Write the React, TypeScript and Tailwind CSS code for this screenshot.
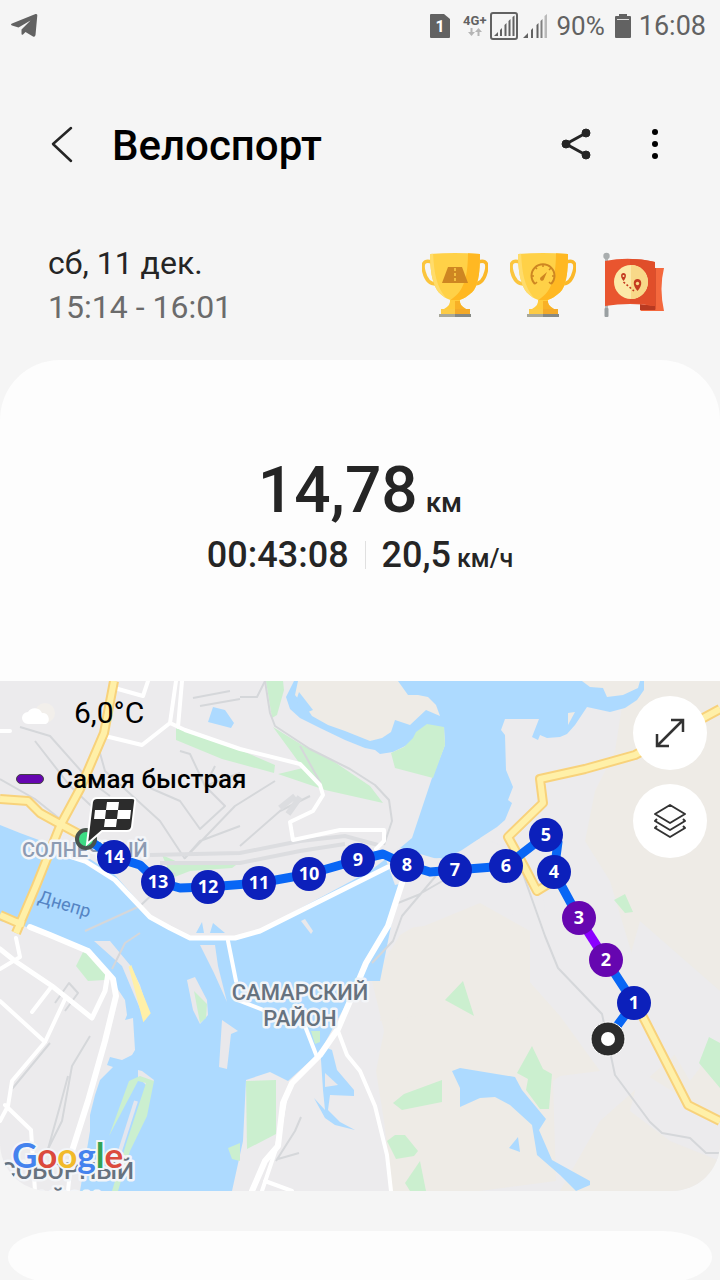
import React from 'react';

type Marker = { n: number; x: number; y: number; fast?: boolean };

// Kilometre marks along the route
const MARKERS: Marker[] = [
    { n: 14, x: 114, y: 176 },
    { n: 13, x: 158, y: 201 },
    { n: 12, x: 208, y: 206 },
    { n: 11, x: 259, y: 202 },
    { n: 10, x: 309, y: 193 },
    { n: 9, x: 358, y: 179 },
    { n: 8, x: 407, y: 184 },
    { n: 7, x: 455, y: 189 },
    { n: 6, x: 506, y: 185 },
    { n: 5, x: 546, y: 154 },
    { n: 4, x: 554, y: 191 },
    { n: 3, x: 579, y: 237, fast: true },
    { n: 2, x: 606, y: 279, fast: true },
    { n: 1, x: 634, y: 322 },
];

function StatusBar() {
    return (
        <div className="flex h-[52px] items-center justify-between pl-2.5 pr-3.5 text-[#626262]">
            <svg className="h-7 w-7" viewBox="0 0 28 28" fill="currentColor">
                <path d="M25.500 2 Q27.500 1.500 27.300 3.500 L25.500 23 Q25 25.500 23 24.500 L15.500 20 L13 22.500 Q11.500 23.500 11.500 21.500 V17.500 L20.500 8.500 L8.500 15.500 L2 13.500 Q0 12.500 2 11.500 Z" />
            </svg>
            <div className="flex items-center leading-8">
                <svg className="mr-3 h-6 w-[21px]" viewBox="0 0 21 24">
                    <path d="M1 0 H14 L20 5 V23 Q20 24 19 24 H1 Q0 24 0 23 V1 Q0 0 1 0 Z" fill="#626262" />
                    <text x="10" y="18" textAnchor="middle" fontSize="16" fontWeight="700" fill="#fff">1</text>
                </svg>
                <div className="mr-1 flex flex-col items-center">
                    <span className="text-[13px] font-bold leading-3">4G+</span>
                    <svg className="h-2.5 w-3.5" viewBox="0 0 14 10" fill="#b5b5b5">
                        <path d="M2.500 1 H4.500 V5 H7 L3.500 9 L0 5 H2.500 Z M9.500 9 H11.500 V5 H14 L10.500 1 L7 5 H9.500 Z" />
                    </svg>
                </div>
                <svg className="mr-1 h-7 w-7" viewBox="0 0 28 28" fill="currentColor">
                    <rect x="1" y="1" width="26" height="26" rx="2" fill="none" stroke="currentColor" strokeWidth="2" />
                    <path d="M4 24 L8 20 V24 Z M10 18 L12 16 V24 H10 Z M14.500 13 L16.500 11 V24 H14.500 Z M18.500 9 L20.500 7 V24 H18.500 Z M22.500 5 L24.500 3.500 V24 H22.500 Z" />
                </svg>
                <svg className="mr-2 h-[26px] w-[26px]" viewBox="0 0 26 26" fill="currentColor">
                    <path d="M1 25 L6 20 V25 Z M9 17 L11 15 V25 H9 Z M14.500 12 L16.500 10 V25 H14.500 Z" />
                    <path d="M22.500 3 L25 1 V25 H22.500 Z" fill="#b9b9b9" />
                    <path d="M18.500 8 L20.500 6 V25 H18.500 Z" fill="#808080" />
                </svg>
                <span className="text-[26px]">90%</span>
                <svg className="ml-2.5 mr-2 h-6 w-4" viewBox="0 0 16 24" fill="currentColor">
                    <path d="M4 0 H12 V2 H15 Q16 2 16 3 V23 Q16 24 15 24 H1 Q0 24 0 23 V3 Q0 2 1 2 H4 Z" />
                    <rect x="2" y="5" width="12" height="1" fill="#ddd" />
                </svg>
                <span className="text-[27px]">16:08</span>
            </div>
        </div>
    );
}

function Trophy({ id, label, children }: { id: string; label: string; children: React.ReactNode }) {
    return (
        <svg className="h-[66px] w-[66px]" viewBox="0 0 66 66" role="img" aria-label={label}>
            <defs>
                <clipPath id={id}>
                    <path d="M8 2 Q33 0 58 2 C58 17 57 30 52 38 C47 44 40 48 33 49 C26 48 19 44 15 38 C10 30 8 17 8 2 Z" />
                </clipPath>
            </defs>
            <path d="M10 10 C1 7 0 13 2 20 C4 28 8 32 14 32" fill="none" stroke="#fbc53d" strokeWidth="3.500" />
            <path d="M56 10 C65 7 66 13 64 20 C62 28 58 32 52 32" fill="none" stroke="#fbb829" strokeWidth="3.500" />
            <g clipPath={`url(#${id})`}>
                <rect width="66" height="50" fill="#ffd147" />
                <path d="M0 0 H11 C12 20 14 34 24 46 L0 50 Z" fill="#ffdc6b" />
                <path d="M46 0 H66 V50 H25 C40 42 46 30 46 0 Z" fill="#ffb822" />
            </g>
            <path d="M28 48 H38 Q37 53 44 57 H22 Q29 53 28 48 Z" fill="#ffcb3c" />
            <path d="M33 49 H38 Q37 53 44 57 H33 Z" fill="#f8b026" />
            <rect x="19" y="57" width="29" height="5" fill="#fccb46" />
            <rect x="33" y="57" width="15" height="5" fill="#f3a928" />
            <rect x="17" y="62" width="32" height="3" fill="#a8a89b" />
            <rect x="33" y="62" width="16" height="3" fill="#858985" />
            {children}
        </svg>
    );
}

function Awards() {
    return (
        <div className="flex items-center gap-[22px]">
            <Trophy id="cup-distance" label="Дистанция">
                <path d="M26 15 H40 L46 31 H20 Z" fill="#ce8622" />
                <path d="M33 16 V31" stroke="#ffd147" strokeWidth="1.500" strokeDasharray="3 2" />
            </Trophy>
            <Trophy id="cup-speed" label="Скорость">
                <path d="M25 32 A11.500 11.500 0 1 1 41 32" fill="none" stroke="#ce8622" strokeWidth="2" />
                <path d="M25 32 L27 30 M22 24 H24 M25 15 L27 17 M33 13 V15 M41 16 L39 18 M44 24 H42 M41 32 L39 30" stroke="#ce8622" strokeWidth="1.500" />
                <path d="M37 20 L34 27 A2 2 0 1 1 31 25 Z" fill="#ce8622" />
            </Trophy>
            <svg className="ml-1 h-[66px] w-[66px]" viewBox="0 0 66 66" role="img" aria-label="Маршрут">
                <path d="M49 16 H62 Q57 36 62 59 H38 L49 50 Z" fill="#f4683d" />
                <path d="M49 16 H54 V58 L49 54 Z" fill="#d9502d" />
                <path d="M38 52 L53 54 V58 H38 Z" fill="#b83a21" />
                <rect x="3" y="5" width="3" height="58" fill="#b4b8b9" />
                <circle cx="4.500" cy="4" r="3.200" fill="#a9adae" />
                <rect x="2.500" y="56" width="4" height="9" rx="1" fill="#999fa1" />
                <path d="M3 9 Q28 4 53 10 V54 Q28 50 3 54 Z" fill="#e9552f" />
                <path d="M28 7 Q42 7 53 10 V54 Q42 51 28 51 Z" fill="#e04e2a" />
                <circle cx="29" cy="30" r="17" fill="#fce9a8" />
                <path d="M29 13 A17 17 0 0 1 29 47 Z" fill="#f8d888" />
                <path d="M21.500 29 C18 25 18.500 21 21.500 21 C24.500 21 25 25 21.500 29 Z" fill="#c43a20" />
                <circle cx="21.500" cy="24" r="1" fill="#fce9a8" />
                <path d="M35.500 39 C30 33 31 27 35.500 27 C40 27 41 33 35.500 39 Z" fill="#c43a20" />
                <circle cx="35.500" cy="31.500" r="1.700" fill="#f8d888" />
                <path d="M21.500 30 L32 39" stroke="#c43a20" strokeWidth="1.600" strokeDasharray="2 2" />
            </svg>
        </div>
    );
}

function RouteMap() {
    return (
        <svg
            className="block h-[510px] w-full"
            viewBox="0 0 720 510"
            preserveAspectRatio="xMidYMid slice"
            role="img"
            aria-label="Карта маршрута"
        >
            <rect width="720" height="510" fill="#ecebed" />

            {/* Terrain */}
            <g fill="#eeebe6">
                <path d="M400 254 L440 230 L480 222 L500 240 L520 290 L560 335 L600 390 L560 395 L553 400 L556 500 L480 510 H392 L384 440 L376 390 L384 350 L372 300 Z" />
                <path d="M626 0 H720 V510 H560 L600 440 L690 360 L640 300 L610 200 L585 160 L595 110 L615 70 Z" />
            </g>
            <path d="M626 290 L640 240 L720 310 V360 L690 400 Z" fill="#ecebed" />
            <path d="M640 390 L720 440 V480 L670 460 L630 430 Z" fill="#ecebed" />

            {/* Water */}
            <g fill="#addaff">
                <path d="M294 0 L286 16 L290 28 L300 37 L320 47 L345 59 L365 67 L375 69 L380 73 L393 71 L444 46 L445 64 L432 97 L412 157 L400 167 L370 190 L258 250 L250 300 L380 300 L400 200 L480 157 L497 146 L505 139 L512 122 L508 119 L513 106 L506 89 L505 54 L501 49 L505 38 H539 L532 56 L538 59 L540 54 L547 57 L560 56 L567 53 L575 44 L587 26 L610 31 L625 27 L637 19 L644 9 V0 Z" />
                <path d="M0 144 L20 152 L90 178 L115 194 L150 234 L170 247 L190 257 H235 L260 250 L390 184 L400 205 L385 250 L366 285 L345 325 L320 371 L288 400 L270 391 L246 399 L243 460 L232 510 H80 L90 450 V434 L95 414 L100 399 L113 386 L107 384 L110 376 L122 379 L132 374 L135 369 L133 337 L125 339 L127 334 L125 319 L115 304 L110 294 L88 269 L50 254 L27 246 L0 240 Z" />
                <path d="M320 364 L332 369 L337 389 L354 409 V415 L330 414 L328 429 L340 441 L355 449 L335 444 L325 437 L314 417 L325 429 L323 409 Z" />
                <path d="M452 390 L460 387 L515 396 L522 409 L546 438 L539 449 L552 479 L570 489 L590 500 V504 L576 510 L560 494 L537 474 L532 444 L510 424 L495 416 L480 417 L460 426 V407 Z" />
                <path d="M509 467 L518 456 L520 471 Z M208 41 L213 26 L225 29 L234 42 L231 47 Z M196 252 L202 241 L204 252 Z M213 242 L225 252 H210 Z" />
            </g>
            <path d="M298 0 L295 14 L308 29 L312 35 L328 44 L345 50 L370 60 L382 57 L391 51 L395 39 L410 44 L426 29 L440 35 L436 24 L428 16 L418 14 L408 14 L398 0 Z" fill="#eeebe6" />
            <path d="M299 11 L313 29 L308 31 L296 20 Z" fill="#addaff" />
            <path d="M582 0 L590 6 L603 7 L607 16 L623 14 L638 7 L640 0 Z M568 32 L575 31 L568 44 Z" fill="#eeebe6" />
            <path d="M400 210 L410 176 L425 178 L440 177 L462 182 L490 160 L540 180 L545 230 L400 248 Z" fill="#ecebed" />
            <path d="M400 255 L480 222 L530 250 V320 L380 340 Z" fill="#eeebe6" />
            <path d="M400 167 L444 180 L455 190 L395 204 L385 176 Z" fill="#ecebed" />
            <path d="M418 157 L480 157 L462 169 L445 178 L425 174 L408 168 Z" fill="#addaff" />

            {/* Islands */}
            <g fill="#e9e8eb">
                <path d="M94 260 L110 260 L130 284 L140 304 L149 333 L145 339 L135 316 L122 285 Z" />
                <path d="M187 299 L195 296 L207 319 L208 334 L200 343 L193 329 Z" />
                <path d="M200 264 L215 264 L218 285 L227 321 L214 292 Z" />
                <path d="M222 339 L238 350 L231 353 L227 388 L219 386 Z" />
                <path d="M138 389 L142 390 L154 399 L150 408 L138 396 Z" />
                <path d="M325 392 L338 404 L325 406 Z" />
                <path d="M301 240 L305 238 L313 250 L311 253 Z" />
            </g>
            <path d="M130 285 L149 332 L144 338 Z" fill="#fff0a8" stroke="#fff0a8" strokeWidth="3" />

            {/* Parks */}
            <g fill="#cbefcf">
                <path d="M266 0 H283 L284 9 L277 34 L272 37 Z" />
                <path d="M176 47 L205 55 L240 69 L275 84 L274 92 L222 78 L176 59 Z" />
                <path d="M273 46 L302 64 L330 78 L370 105 L383 122 L325 109 L278 93 L303 87 Z" />
                <path d="M391 72 L404 66 L413 57 L416 51 L427 43 L444 46 L445 64 L433 97 L395 87 Z" />
                <path d="M162 174 L180 182 L210 184 L240 181 L232 187 L190 190 L172 197 Z" />
                <path d="M84 269 L90 269 L107 293 L105 299 L88 300 L76 285 Z" />
                <path d="M194 310 L207 323 L206 337 L200 342 Z" />
                <path d="M109 455 L129 400 L140 395 L154 400 L147 435 L130 470 L118 510 H112 L127 460 L146 402 L138 400 Z" />
                <path d="M246 400 L276 399 V453 L247 468 Z" />
                <path d="M445 319 L463 300 L474 335 Z" />
                <path d="M393 422 L404 413 L442 399 V421 L402 429 Z" />
                <path d="M387 460 L395 454 L405 454 L418 470 L414 475 L396 478 Z" />
                <path d="M420 480 L426 510 H410 L405 502 Z" />
                <path d="M532 365 L517 392 L528 398 L526 409 L540 428 H549 L552 393 L543 388 Z" />
                <path d="M709 356 L699 382 L720 407 V362 Z M614 219 L625 213 L633 231 L625 232 Z M311 350 H320 V361 L315 363 Z M228 467 L240 462 V480 L232 478 Z" />
            </g>
            <path d="M136 420 L120 470" stroke="#e4e6ee" strokeWidth="4" />

            {/* Railways and minor lines */}
            <g fill="none" stroke="#d5d7da" strokeWidth="2" strokeLinejoin="round">
                <path d="M265 0 L270 32 L275 45 L310 68 L350 88 L375 104 L389 119 L392 140 L384 164" />
                <path d="M300 65 L320 101 L323 115 M240 16 H257 L265 0" />
                <path d="M522 190 L545 255 L558 287 L602 333 L615 394 L650 441 L662 452 L690 457 L706 472 L720 472" />
                <path d="M0 98 L35 118 L85 158 M20 46 L50 55 L90 100 L110 115 M35 60 L70 105 L118 150 M98 65 L105 90 L160 140 L185 178" />
                <path d="M180 70 L190 73 L205 105 L240 92 M205 105 L215 85 M205 105 L225 125 L200 148 L180 120 L150 107 M240 145 L200 160 L185 177 L235 125 L275 100 M240 165 L280 130 L310 115" />
                <path d="M193 17 L230 10 M200 25 L240 18 M85 250 L140 225 L175 192" />
                <path d="M112 288 L125 262 L140 252 M55 322 L69 302 L78 312 L65 330 M90 355 L72 385 L62 440 L48 468 L60 425 L68 395 M50 362 L12 408" />
                <path d="M276 480 L295 450 L301 436 M278 478 L299 472 M398 222 L418 214 L465 187 M440 190 L402 235 L393 260 L372 282" />
            </g>
            <g fill="none" stroke="#dcdde0" strokeWidth="4">
                <path d="M150 174 L240 172 L300 160 L345 155 L378 164 M160 182 L240 182 L300 170 L345 163" />
                <path d="M280 127 L295 115 M288 133 L300 116" strokeWidth="6" />
            </g>

            {/* White streets */}
            <g fill="none" stroke="#fff" strokeWidth="4" strokeLinejoin="round" strokeLinecap="round">
                <path d="M105 55 L142 64 L170 42 L176 0 M182 0 L178 46 M170 42 L185 49 L240 68 L300 83 L320 104 L323 114 L313 130 L290 141 L293 159 L340 149 H384 V160 L376 168" />
                <path d="M118 8 L143 15 L148 0 M0 50 H10" />
                <path d="M60 172 L85 180 L115 199 L150 236 L170 247 L190 257 H235 L260 250 L388 186" strokeWidth="5" />
                <path d="M402 202 L388 245 L366 282 L350 320 L338 348 L320 374 L292 402 L283 422 L278 465 L265 480 L252 510" strokeWidth="6" />
                <path d="M285 420 L277 465 L262 510 M265 500 L292 510 M338 350 L347 374 L360 390 L375 425 L387 474 L391 510 M228 260 L236 300 M240 320 L305 345 L317 376" />
                <path d="M30 246 L50 254 L88 270 L113 298 L116 315 L105 360 L88 420 L72 470" strokeWidth="6" />
                <path d="M0 268 L15 280 L52 305 L92 337 L105 310 L108 292" strokeWidth="5" />
                <path d="M16 257 L20 276 L0 288 M0 320 L45 361 L12 400 L8 425 L0 440 M52 305 L32 331 M66 316 L45 361 M5 424 L31 449 L35 510 M72 470 L68 510" />
            </g>

            {/* Highways: casing first, then fill */}
            <g fill="none" strokeLinejoin="round">
                <g stroke="#f8d27b" strokeWidth="10">
                    <path d="M114 0 L104 52 L80 108 L60 145 L36 205 L16 252 M0 118 L28 120 L40 132 L60 143 L88 158 M0 234 L16 241 L24 243" />
                    <path d="M720 28 L635 74 L585 88 L540 98 L543 122 L508 156 L525 187 L537 210 L560 196 M640 330 L688 424 L720 440" />
                </g>
                <g stroke="#fff0a8" strokeWidth="6">
                    <path d="M114 0 L104 52 L80 108 L60 145 L36 205 L16 252 M0 118 L28 120 L40 132 L60 143 L88 158 M0 234 L16 241 L24 243" />
                    <path d="M720 28 L635 74 L585 88 L540 98 L543 122 L508 156 L525 187 L537 210 L560 196 M640 330 L688 424 L720 440" />
                </g>
            </g>

            {/* Place names */}
            <g stroke="#f3f5f8" strokeWidth="5" strokeLinejoin="round" paintOrder="stroke" fontWeight="500">
                <text x="22" y="176" fontSize="20" fill="#8d9bb2">СОЛНЕЧНЫЙ</text>
                <g fill="#66727f" fontSize="22" textAnchor="middle">
                    <text x="300" y="319">САМАРСКИЙ</text>
                    <text x="300" y="345">РАЙОН</text>
                </g>
                <g fill="#66727f" fontSize="24">
                    <text x="134" y="498" textAnchor="end">СОБОРНЫЙ</text>
                    <text x="60" y="528" textAnchor="middle">РАЙОН</text>
                </g>
            </g>
            <text x="37" y="221" fontSize="18" fill="#5585c4" transform="rotate(17 37 221)">Днепр</text>

            {/* Route */}
            <g fill="none" strokeWidth="9" strokeLinejoin="round">
                <path d="M90 160 L114 176 L140 184 L158 201 L180 207 L208 206 L259 202 L309 193 L358 179 L383 173 L407 184 L430 191 L455 189 L506 185 L546 154 L558 161 L554 191 L579 237 M606 279 L634 322 L608 357" stroke="#0866f5" />
                <path d="M579 237 L606 279" stroke="#8b00ff" />
            </g>

            {/* Finish */}
            <circle cx="86" cy="158" r="9" fill="#3ddc84" stroke="#47524c" strokeWidth="4" />
            <path d="M97 117 H132 Q136 117 135 121 L132 146 Q131 150 127 150 H102 L87 163 L92 121 Q93 117 97 117 Z" fill="#2c2c2c" stroke="#fff" strokeWidth="2" />
            <path d="M107 121 H119 L118 129 H106 Z M95 129 H106 L105 138 H94 Z M118 129 H131 L130 138 H117 Z M105 138 H117 L116 146 H104 Z" fill="#fff" />

            {/* Start */}
            <circle cx="608" cy="358" r="17" fill="#2c2c2c" stroke="#fff" strokeWidth="1" />
            <circle cx="608" cy="358" r="7" fill="#fff" />

            {MARKERS.map(m => (
                <g key={m.n}>
                    <circle cx={m.x} cy={m.y} r="17" fill={m.fast ? '#6606b0' : '#0c20bb'} />
                    <text
                        x={m.x}
                        y={m.y + 6}
                        textAnchor="middle"
                        fontSize="18"
                        fill="#fff"
                        className="font-['Noto_Sans',sans-serif] font-bold"
                    >
                        {m.n}
                    </text>
                </g>
            ))}

            <text
                x="12"
                y="487"
                fontSize="35"
                stroke="#f3f5f8"
                strokeWidth="4"
                paintOrder="stroke"
                className="font-['Lato',sans-serif] font-bold"
            >
                <tspan fill="#4483ee">G</tspan>
                <tspan fill="#db4a3d">o</tspan>
                <tspan fill="#f2ba2a">o</tspan>
                <tspan fill="#4483ee">g</tspan>
                <tspan fill="#34a353">l</tspan>
                <tspan fill="#db4a3d">e</tspan>
            </text>
        </svg>
    );
}

export default function App() {
    return (
        <main className="h-screen overflow-hidden bg-[#f5f5f5] font-['Roboto',sans-serif] text-[#252525]">
            <StatusBar />

            {/* Header */}
            <header className="flex items-center justify-between pl-10 pr-[43px] pt-16">
                <div className="flex items-center gap-7">
                    <button type="button" aria-label="Назад" className="flex h-[60px] w-11 items-center justify-center">
                        <svg className="h-10 w-6" viewBox="0 0 24 40" fill="none" stroke="#252525" strokeWidth="2.500" strokeLinecap="round" strokeLinejoin="round">
                            <path d="M21 2 L3 18 L21 35" />
                        </svg>
                    </button>
                    <h1 className="text-[42px] font-medium leading-[60px] text-black">Велоспорт</h1>
                </div>
                <div className="flex items-center gap-9">
                    <button type="button" aria-label="Поделиться" className="flex h-[60px] w-11 items-center justify-center">
                        <svg className="h-9 w-8" viewBox="0 0 32 36" fill="#252525" stroke="#252525">
                            <path d="M27 5 L7 16 L27 27" fill="none" strokeWidth="3" />
                            <circle cx="27" cy="5" r="4" />
                            <circle cx="7" cy="16" r="4" />
                            <circle cx="27" cy="27" r="4" />
                        </svg>
                    </button>
                    <button type="button" aria-label="Ещё" className="flex h-[60px] w-11 items-center justify-center">
                        <svg className="h-9 w-2" viewBox="0 0 8 36">
                            <circle cx="4" cy="4" r="3" />
                            <circle cx="4" cy="16" r="3" />
                            <circle cx="4" cy="28" r="3" />
                        </svg>
                    </button>
                </div>
            </header>

            {/* Date and awards */}
            <section className="flex items-center justify-between pb-[31px] pl-12 pr-[52px] pt-[65px]">
                <div className="text-[32px] leading-[44px]">
                    <p>сб, 11 дек.</p>
                    <p className="text-[#6b6b6b]">15:14 - 16:01</p>
                </div>
                <Awards />
            </section>

            {/* Summary */}
            <section className="rounded-t-[60px] bg-[#fdfdfd] pb-[102px] pt-[91px] font-medium">
                <p className="flex h-20 items-baseline justify-center gap-2 text-[64px] leading-[80px]">
                    14,78 <span className="text-[28px] leading-none">км</span>
                </p>
                <div className="flex h-12 items-center justify-center gap-4 text-[36px] leading-[48px]">
                    <span>00:43:08</span>
                    <span className="h-7 w-px bg-[#e0e0e0]" />
                    <span className="flex items-baseline gap-1.5">
                        20,5 <span className="text-[25px] leading-none">км/ч</span>
                    </span>
                </div>
            </section>

            {/* Map */}
            <section className="relative overflow-hidden rounded-b-[48px]">
                <RouteMap />
                <div className="absolute left-4 top-3.5 flex flex-col gap-8 text-black">
                    <div className="flex items-center gap-4">
                        <svg className="ml-1 h-7 w-[38px]" viewBox="0 0 38 28">
                            <circle cx="25" cy="14" r="10" fill="#f2efeb" />
                            <path d="M8 25 A6 6 0 0 1 8 13 A8 8 0 0 1 22 14 A6 6 0 0 1 26 25 Z" fill="#fff" />
                        </svg>
                        <span className="text-[30px] leading-9">6,0°C</span>
                    </div>
                    <div className="flex items-center gap-3">
                        <span className="h-2.5 w-7 rounded-full border border-[#444] bg-[#6606b0]" />
                        <span className="text-[26px] font-medium leading-8">Самая быстрая</span>
                    </div>
                </div>
                <div className="absolute right-[13px] top-[15px] flex flex-col gap-3.5">
                    <button type="button" aria-label="Развернуть карту" className="flex size-[74px] items-center justify-center rounded-full bg-white">
                        <svg className="size-8" viewBox="0 0 32 32" fill="none" stroke="#333" strokeWidth="2.500">
                            <path d="M3 29 L29 3 M17 3 H29 V15 M3 17 V29 H15" />
                        </svg>
                    </button>
                    <button type="button" aria-label="Слои карты" className="flex size-[74px] items-center justify-center rounded-full bg-white">
                        <svg className="size-9" viewBox="0 0 36 36" fill="none" stroke="#333" strokeWidth="2" strokeLinejoin="round">
                            <path d="M18 2 L33 11 L18 20 L3 11 Z M5 16 L3 18 L18 27 L33 18 L31 16 M5 23 L3 25 L18 34 L33 25 L31 23" />
                        </svg>
                    </button>
                </div>
            </section>

            <section className="mx-2 mt-10 h-[52px] rounded-[50px/26px] bg-[#fdfdfd]" />
        </main>
    );
}
